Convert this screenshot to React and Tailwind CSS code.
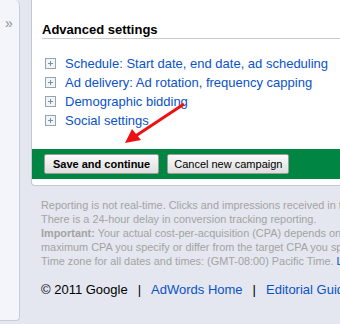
import React from "react";

function PlusBox() {
  return (
    <span className="relative inline-block w-[11px] h-[11px] border border-[#93a4b3] bg-[#f2f5f8] shrink-0">
      <span className="absolute left-[2px] top-[4px] w-[5px] h-px bg-[#7f8e9b]" />
      <span className="absolute left-[4px] top-[2px] w-px h-[5px] bg-[#7f8e9b]" />
    </span>
  );
}

const items = [
  "Schedule: Start date, end date, ad scheduling",
  "Ad delivery: Ad rotation, frequency capping",
  "Demographic bidding",
  "Social settings",
];

export default function App() {
  return (
    <div className="relative w-[340px] h-[324px] overflow-hidden bg-[#e4e7ef] flex font-['Liberation_Sans',Arial,sans-serif]">
      <div className="w-[20px] h-[321px] shrink-0 bg-[#f4f5fa] border-r border-b border-[#c8ccd7] rounded-br-[4px] rounded-tr-[5px]">
        <div className="pl-[5px] pt-[15px] text-[14px] leading-[16px] text-[#8a8f99]">»</div>
      </div>
      <div className="ml-[11px] w-[330px] shrink-0">
        <div className="bg-white border-l border-b border-[#c3c7d0] rounded-bl-[4px]">
          <div className="pl-[10px] pt-[22px]">
            <div className="text-[13px] leading-[15px] font-bold text-black">Advanced settings</div>
            <div className="mt-[1px] h-px bg-[#cccccc]" />
          </div>
          <ul className="pl-[13px] pt-[15px]">
            {items.map((t) => (
              <li key={t} className="flex items-center h-[19px] gap-[9px]">
                <PlusBox />
                <span className="text-[13px] leading-[19px] text-[#0a52c8] whitespace-nowrap">{t}</span>
              </li>
            ))}
          </ul>
          <div className="mt-[19px] h-[30px] bg-[#008542] flex items-start pt-[5px] pl-[12px] gap-[8px]">
            <button className="h-[20px] px-[8px] border border-[#9c9c9c] rounded-[2px] bg-gradient-to-b from-[#fafafa] to-[#dedede] text-[11px] font-bold text-black leading-[18px] whitespace-nowrap">
              Save and continue
            </button>
            <button className="h-[20px] px-[6px] border border-[#9c9c9c] rounded-[2px] bg-gradient-to-b from-[#fafafa] to-[#dedede] text-[11px] text-black leading-[18px] whitespace-nowrap">
              Cancel new campaign
            </button>
          </div>
          <div className="h-[6px]" />
        </div>
        <div className="pl-[10px] pt-[12px] text-[10.9px] leading-[14px] text-[#a3a3a3] whitespace-nowrap">
          <div>Reporting is not real-time. Clicks and impressions received in the last three hours may not be included here.</div>
          <div>There is a 24-hour delay in conversion tracking reporting.</div>
          <div>
            <span className="font-bold">Important:</span> Your actual cost-per-acquisition (CPA) depends on factors outside of our control. It might exceed the
          </div>
          <div>maximum CPA you specify or differ from the target CPA you specify.</div>
          <div>
            Time zone for all dates and times: (GMT-08:00) Pacific Time. <span className="text-[#0a52c8]">Learn more</span>
          </div>
        </div>
        <div className="pl-[10px] pt-[14px] text-[13px] leading-[16px] whitespace-nowrap text-black">
          © 2011 Google<span className="mx-[10px]">|</span>
          <span className="text-[#0a52c8]">AdWords Home</span>
          <span className="mx-[10px]">|</span>
          <span className="text-[#0a52c8]">Editorial Guidelines</span>
        </div>
      </div>
      <svg className="absolute left-0 top-0 pointer-events-none" width="340" height="324" viewBox="0 0 340 324">
        <line x1="184" y1="104" x2="134" y2="137" stroke="#ee1111" strokeWidth="3" />
        <polygon points="125,143 132,129 141,140" fill="#ee1111" />
      </svg>
    </div>
  );
}
